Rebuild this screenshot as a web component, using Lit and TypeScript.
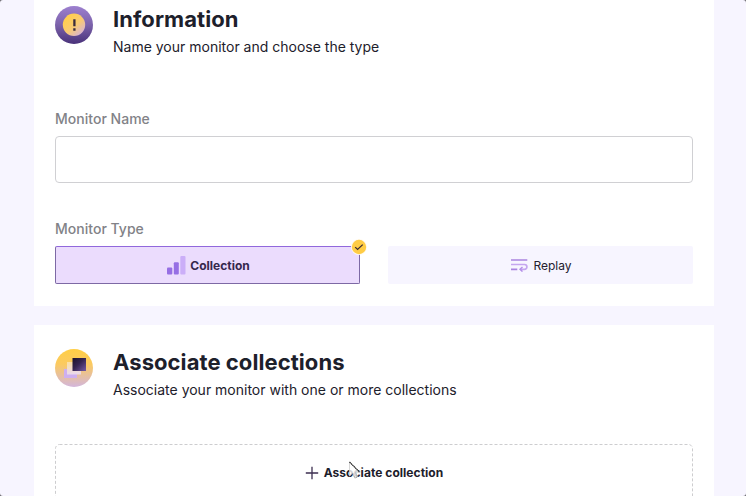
import { LitElement, html, svg, css } from "lit";
import { customElement, property } from "lit/decorators.js";

@customElement("section-header")
class SectionHeader extends LitElement {
  @property() heading = "";
  @property() description = "";

  static styles = css`
    :host { display: flex; gap: 20px; height: 54px; }
    .icon { width: 38px; height: 38px; flex: none; padding-top: 2px; }
    h2 { margin: 0; font-size: 22px; line-height: 30px; font-weight: 700; letter-spacing: .07px; white-space: nowrap; }
    p { margin: 3px 0 0; font-size: 14px; line-height: 20px; white-space: nowrap; }
  `;

  render() {
    return html`
      <div class="icon"><slot></slot></div>
      <div>
        <h2>${this.heading}</h2>
        <p>${this.description}</p>
      </div>
    `;
  }
}

const infoIcon = svg`
  <svg class="badge" viewBox="0 0 38 38">
    <defs>
      <linearGradient id="ring" x1="0" y1="0" x2="0" y2="1">
        <stop offset="0" stop-color="#9d80cf"/><stop offset=".5" stop-color="#7b62aa"/><stop offset="1" stop-color="#49327a"/>
      </linearGradient>
      <linearGradient id="core" x1=".25" y1=".2" x2=".9" y2=".95">
        <stop offset="0" stop-color="#ffce52"/><stop offset=".45" stop-color="#f9ca72"/><stop offset="1" stop-color="#d3b1e2"/>
      </linearGradient>
    </defs>
    <circle cx="19" cy="19" r="19" fill="url(#ring)"/>
    <circle cx="19" cy="18.8" r="11.2" fill="url(#core)"/>
    <path d="M19.4 13.2v7" stroke="#3a2c3c" stroke-width="2.3"/>
    <path d="M19.4 22.3v2.4" stroke="#3a2c3c" stroke-width="2.3"/>
  </svg>`;

const stackIcon = svg`
  <svg class="badge" viewBox="0 0 38 38">
    <defs>
      <linearGradient id="sun" x1="0" y1="0" x2="0" y2="1">
        <stop offset="0" stop-color="#ffce45"/><stop offset=".4" stop-color="#fbca61"/><stop offset="1" stop-color="#d3b6dc"/>
      </linearGradient>
      <linearGradient id="mid" x1="0" y1="0" x2="0" y2="1">
        <stop offset="0" stop-color="#fbe0a4"/><stop offset="1" stop-color="#ead9ee"/>
      </linearGradient>
      <linearGradient id="top" x1="0" y1="0" x2="1" y2="1">
        <stop offset="0" stop-color="#1b132b"/><stop offset=".45" stop-color="#34244f"/><stop offset="1" stop-color="#755aa6"/>
      </linearGradient>
    </defs>
    <circle cx="19" cy="19" r="19" fill="url(#sun)"/>
    <path d="M9 20h13v9H9z" fill="#ceaff0"/>
    <rect x="12" y="13" width="14" height="12.5" fill="url(#mid)"/>
    <rect x="17.5" y="9" width="13.5" height="13" fill="url(#top)"/>
  </svg>`;

@customElement("app-root")
class AppRoot extends LitElement {
  static styles = css`
    :host {
      display: block; position: relative; width: 746px; height: 496px; overflow: hidden;
      background: #6b6b70; color: #1d202b; font-family: Inter, sans-serif;
    }
    * { box-sizing: border-box; }
    .window {
      height: 100%; padding: 0 32px 0 34px; overflow: hidden; border-radius: 3px; background: #f7f5ff;
      display: flex; flex-direction: column; gap: 19px;
    }
    .card { flex: none; background: #fff; padding: 0 21px; }
    .information { height: 306px; padding-top: 4px; }
    .associate { height: 190px; padding-top: 22px; }
    .badge { display: block; width: 38px; height: 38px; }
    .label { display: block; font-size: 14px; font-weight: 500; line-height: 18px; letter-spacing: .02px; color: #828287; }
    .name-label { margin-top: 52px; }
    .field { display: block; width: 100%; height: 47px; margin: 8px 0 37px; border: 1px solid #d0d0d3; border-radius: 4px; background: #fff; outline: 0; }
    .types { display: grid; grid-template-columns: 305px 305px; gap: 28px; margin-top: 8px; }
    .type {
      position: relative; display: flex; align-items: center; justify-content: center; height: 38px;
      border: 0; border-radius: 2px; padding: 0 0 0 2px; background: #f7f5ff; font: 400 12px/16px Inter, sans-serif; color: #24202f;
    }
    .type span { padding-top: 1px; }
    .selected { background: #ebdcfd; border: 1px solid #7d69a5; border-top-color: #9168dc; font-weight: 700; color: #35284c; }
    .bars { width: 19px; height: 19px; margin-right: 4px; }
    .wrap { width: 17px; height: 14px; margin-right: 5px; }
    .check { position: absolute; right: -8px; top: -8px; width: 16px; height: 16px; overflow: visible; }
    .add {
      display: flex; align-items: center; justify-content: center; width: 100%; height: 57px; margin-top: 43px;
      position: relative; padding: 0; border: 0; background: none; font: 700 12px/16px Inter, sans-serif; letter-spacing: .04px; color: #1d202b;
    }
    .outline { position: absolute; inset: 0; width: 638px; height: 57px; }
    .plus { width: 14px; height: 14px; margin-right: 5px; }
    .cursor { position: absolute; left: 348px; top: 461px; width: 12px; height: 19px; }
  `;

  render() {
    return html`
      <main class="window">
        <section class="card information">
          <section-header heading="Information" description="Name your monitor and choose the type">${infoIcon}</section-header>
          <label class="label name-label" for="name">Monitor Name</label>
          <input class="field" id="name" />
          <span class="label">Monitor Type</span>
          <div class="types">
            <button class="type selected">
              <svg class="bars" viewBox="0 0 19 19">
                <rect x="0" y="11.5" width="5.3" height="7" rx="1" fill="#966fe4"/>
                <rect x="6.8" y="6.3" width="5" height="12.2" rx="1" fill="#966fe4"/>
                <rect x="13.3" y="0" width="5.2" height="18.5" rx="1" fill="#cbaef8"/>
              </svg>
              <span>Collection</span>
              <svg class="check" viewBox="0 0 16 16">
                <circle cx="8" cy="8" r="8" fill="#fffaf0"/>
                <circle cx="8" cy="8" r="7.2" fill="#ffcc45"/>
                <path d="M4.2 8.1l2.4 2.3 5.1-4.8" fill="none" stroke="#3c2d34" stroke-width="1.3"/>
              </svg>
            </button>
            <button class="type">
              <svg class="wrap" viewBox="0 0 17 14" fill="none" stroke-width="1.7">
                <path d="M0 2h16.3" stroke="#aa83df"/>
                <path d="M0 6.5h13.5a2.4 2.4 0 0 1 0 4.8H9.6" stroke="#c5a6ef"/>
                <path d="M0 11.3h6.3" stroke="#aa83df"/>
                <path d="M11.5 9L9 11.3l2.5 2.3" stroke="#b48ee8" stroke-width="1.4"/>
              </svg>
              <span>Replay</span>
            </button>
          </div>
        </section>
        <section class="card associate">
          <section-header heading="Associate collections" description="Associate your monitor with one or more collections">${stackIcon}</section-header>
          <button class="add">
            <svg class="outline" viewBox="0 0 638 57">
              <rect x=".5" y=".5" width="637" height="70" rx="4" fill="none" stroke="#cdcdcf" stroke-dasharray="3 2"/>
            </svg>
            <svg class="plus" viewBox="0 0 14 14"><path d="M7 .8v12.4M.8 7h12.4" stroke="#3c2e50" stroke-width="1.3"/></svg>
            <span>Associate collection</span>
          </button>
        </section>
      </main>
      <svg class="cursor" viewBox="0 0 12 19">
        <path d="M1.5 1v14l3.2-3 2.2 5 2.6-1-2.1-4.8h4.2z" fill="#fff" fill-opacity=".8" stroke="#ccc" stroke-width=".8"/>
        <path d="M1.5 1l9.7 9.7" stroke="#222" stroke-width="1.1" stroke-dasharray="1.6 .4"/>
        <path d="M4.7 12.2l2.2 4.8 2.6-1-1.5-3.4" fill="none" stroke="#888" stroke-width=".7" stroke-dasharray="1 .6"/>
      </svg>
    `;
  }
}
